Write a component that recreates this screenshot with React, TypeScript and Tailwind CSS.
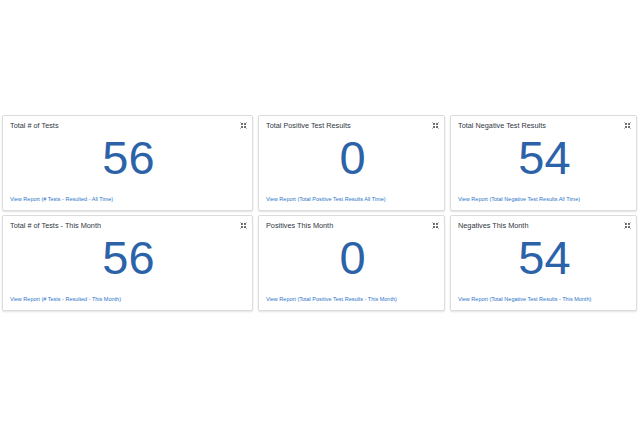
const cards = [
  { title: "Total # of Tests", value: "56", link: "View Report (# Tests - Resulted - All Time)" },
  { title: "Total Positive Test Results", value: "0", link: "View Report (Total Positive Test Results All Time)" },
  { title: "Total Negative Test Results", value: "54", link: "View Report (Total Negative Test Results All Time)" },
  { title: "Total # of Tests - This Month", value: "56", link: "View Report (# Tests - Resulted - This Month)" },
  { title: "Positives This Month", value: "0", link: "View Report (Total Positive Test Results - This Month)" },
  { title: "Negatives This Month", value: "54", link: "View Report (Total Negative Test Results - This Month)" },
];

function CompressIcon() {
  return (
    <svg width="7" height="7" viewBox="0 0 14 14" fill="none" stroke="#6b6b6b" strokeWidth="2">
      <path d="M1 1l4 4M5 2v3H2" />
      <path d="M13 1l-4 4M9 2v3h3" />
      <path d="M1 13l4-4M5 12V9H2" />
      <path d="M13 13l-4-4M9 12V9h3" />
    </svg>
  );
}

export default function App() {
  return (
    <div
      className="w-[640px] h-[428px] bg-white pt-[115px] pl-[2px]"
      style={{ fontFamily: '"Liberation Sans", Arial, sans-serif' }}
    >
      <div className="grid grid-cols-[251px_187px_187px] gap-x-[5px] gap-y-[4px]">
        {cards.map((c) => (
          <div
            key={c.title}
            className="h-[96px] bg-white border border-[#dcdcdc] rounded-[2px] shadow-[0_1px_2px_rgba(0,0,0,0.12)] flex flex-col pl-[7px] pr-[5px] pt-[5px]"
          >
            <div className="flex items-center justify-between h-[10px]">
              <span className="text-[7.3px] leading-[10px] text-[#2f3642]">{c.title}</span>
              <span className="flex mt-[-2px]">
                <CompressIcon />
              </span>
            </div>
            <div className="mt-[3px] text-center text-[47px] leading-[47px] text-[#2c63a8]">
              {c.value}
            </div>
            <div className="mt-[14px] text-[5.5px] leading-[8px] text-[#2b74c8]">{c.link}</div>
          </div>
        ))}
      </div>
    </div>
  );
}
